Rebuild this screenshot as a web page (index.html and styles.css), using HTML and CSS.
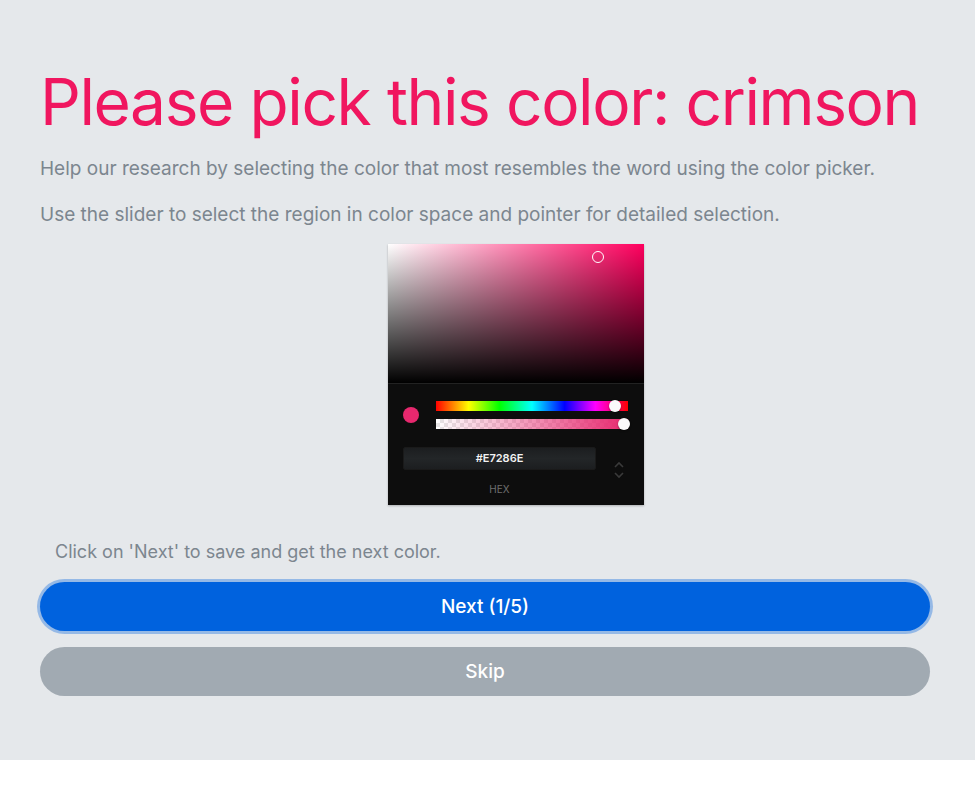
FILE: index.html
```html
<!DOCTYPE html>
<html>
<head>
<meta charset="utf-8">
<link rel="stylesheet" href="styles.css">
</head>
<body>
<div class="page">
  <h1 class="title">Please pick this color: crimson</h1>
  <p class="lead">Help our research by selecting the color that most resembles the word using the color picker.</p>
  <p class="lead">Use the slider to select the region in color space and pointer for detailed selection.</p>
  <div class="picker-wrap">
    <div class="picker">
      <div class="sat">
        <div class="sat-white"></div>
        <div class="sat-black"></div>
        <div class="pointer"></div>
      </div>
      <div class="controls">
        <div class="row">
          <div class="swatch"></div>
          <div class="sliders">
            <div class="hue"><div class="thumb hue-thumb"></div></div>
            <div class="alpha"><div class="alpha-fill"></div><div class="thumb alpha-thumb"></div></div>
          </div>
        </div>
        <div class="fields">
          <div class="field">
            <div class="hex-input">#E7286E</div>
            <div class="hex-label">HEX</div>
          </div>
          <svg class="toggle" width="12" height="22" viewBox="0 0 12 22">
            <path d="M2 8 L6 4 L10 8" fill="none" stroke="#3a3a3a" stroke-width="1.6"/>
            <path d="M2 14 L6 18 L10 14" fill="none" stroke="#3a3a3a" stroke-width="1.6"/>
          </svg>
        </div>
      </div>
    </div>
  </div>
  <p class="hint">Click on 'Next' to save and get the next color.</p>
  <div class="buttons">
    <button class="btn btn-next">Next (1/5)</button>
    <button class="btn btn-skip">Skip</button>
  </div>
</div>
</body>
</html>
```
FILE: styles.css
```css
* { box-sizing: border-box; }
html, body { margin: 0; padding: 0; background: #fff; }
body { font-family: Inter, "Noto Sans", "Liberation Sans", sans-serif; }
.page {
  background: #e5e8eb;
  height: 760px;
  padding: 62px 40px 0 40px;
}
.title {
  margin: 0;
  font-size: 64px;
  font-weight: 400;
  color: #f0165f;
  line-height: 80px;
  letter-spacing: -1.4px;
  white-space: nowrap;
}
.lead {
  margin: 12px 0 0 0;
  font-size: 19px;
  line-height: 30px;
  color: #7c868f;
}
.lead + .lead { margin-top: 16px; }
.picker-wrap {
  display: flex;
  justify-content: center;
  margin-top: 14px;
}
.picker {
  width: 256px;
  margin-left: 57px;
  background: #0d0d0d;
  box-shadow: 0 1px 2px rgba(0,0,0,0.25);
}
.sat {
  position: relative;
  height: 140px;
  background: #ff005e;
  border-bottom: 1px solid #222;
}
.sat-white {
  position: absolute; inset: 0;
  background: linear-gradient(to right, #fff, rgba(255,255,255,0));
}
.sat-black {
  position: absolute; inset: 0;
  background: linear-gradient(to top, #000, rgba(0,0,0,0));
}
.pointer {
  position: absolute;
  left: 204px; top: 7px;
  width: 12px; height: 12px;
  border-radius: 50%;
  border: 1.5px solid #fff;
}
.controls {
  padding: 17px 16px 10px 15px;
}
.row {
  display: flex;
  align-items: center;
}
.swatch {
  width: 16px; height: 16px;
  border-radius: 50%;
  background: #e7286e;
  margin-right: 17px;
}
.sliders { flex: 1; }
.hue {
  position: relative;
  height: 10px;
  margin-bottom: 8px;
  background: linear-gradient(to right, #f00 0%, #ff0 17%, #0f0 33%, #0ff 50%, #00f 67%, #f0f 83%, #f00 100%);
}
.alpha {
  position: relative;
  height: 10px;
  background-color: #fff;
  background-image:
    linear-gradient(45deg, #e6e6e6 25%, transparent 25%, transparent 75%, #e6e6e6 75%),
    linear-gradient(45deg, #e6e6e6 25%, transparent 25%, transparent 75%, #e6e6e6 75%);
  background-size: 8px 8px;
  background-position: 0 0, 4px 4px;
}
.alpha-fill {
  position: absolute; inset: 0;
  background: linear-gradient(to right, rgba(231,40,110,0), #e7286e);
}
.thumb {
  position: absolute;
  top: -1px;
  width: 12px; height: 12px;
  border-radius: 50%;
  background: #fafafa;
  box-shadow: 0 1px 2px rgba(0,0,0,0.4);
}
.hue-thumb { left: 173px; }
.alpha-thumb { left: 182px; }
.fields {
  display: flex;
  align-items: flex-start;
  margin-top: 18px;
}
.field { width: 193px; }
.hex-input {
  height: 23px;
  border: 1px solid #1a1a1a;
  border-radius: 2px;
  background: linear-gradient(to bottom, #1c1e20, #232628 50%, #1c1e20);
  color: #f2f2f2;
  font-size: 11px;
  font-weight: 600;
  text-align: center;
  line-height: 21px;
}
.hex-label {
  text-align: center;
  color: #6f6f6f;
  font-size: 10px;
  margin-top: 13px;
  line-height: 12px;
}
.toggle { margin-left: 17px; margin-top: 12px; }
.hint {
  margin: 35px 0 0 15px;
  font-size: 18px;
  line-height: 24px;
  color: #7c868f;
}
.buttons {
  display: flex;
  flex-direction: column;
  gap: 16px;
  margin-top: 18px;
  padding-right: 5px;
}
.btn {
  border: none;
  height: 49px;
  border-radius: 25px;
  color: #fff;
  font-family: Inter, "Noto Sans", "Liberation Sans", sans-serif;
  font-size: 19px;
  font-weight: 450;
}
.btn-next {
  background: #0062de;
  box-shadow: 0 0 0 3px rgba(0, 98, 222, 0.35);
}
.btn-skip { background: #a1aab2; }
```
